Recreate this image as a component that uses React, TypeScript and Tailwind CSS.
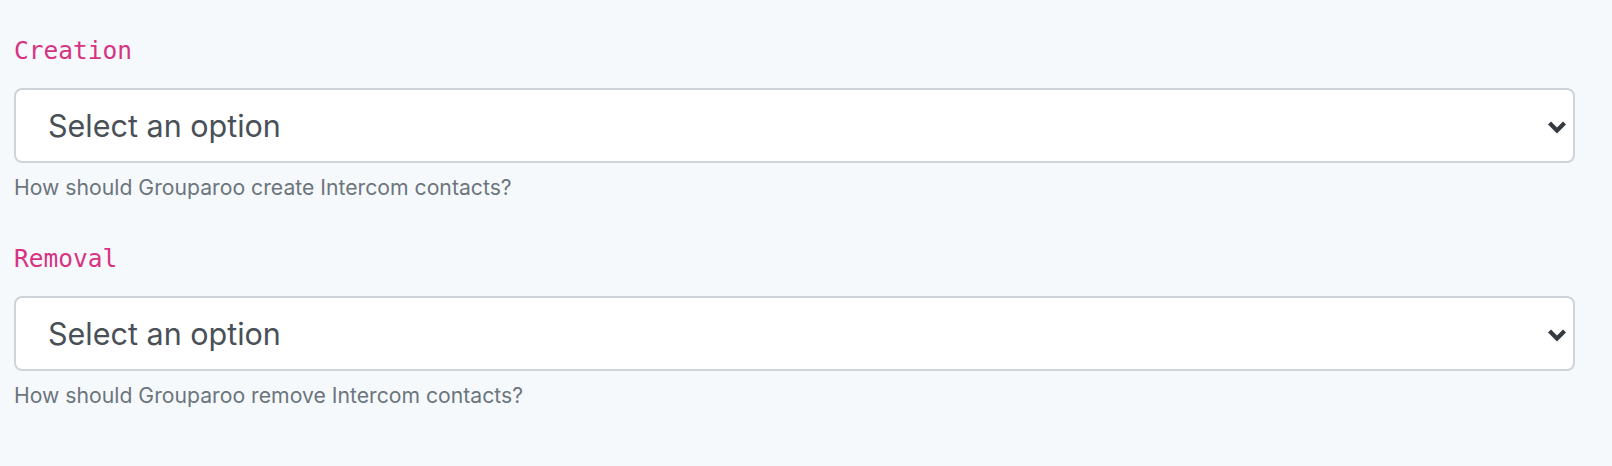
import React from "react";

const Chevron = () => (
  <svg width="20" height="14" viewBox="0 0 20 14" className="mt-[2px] shrink-0">
    <polyline points="2.5,3 10,10.5 17.5,3" fill="none" stroke="#343a40" strokeWidth="4.2" strokeLinecap="butt" strokeLinejoin="miter" />
  </svg>
);

function Field({ label, help }: { label: string; help: string }) {
  return (
    <div className="flex flex-col">
      <code className="block text-[24.5px] leading-[28px] text-[#d63384]" style={{ fontFamily: '"DejaVu Sans Mono", monospace' }}>
        {label}
      </code>
      <div className="mt-[23px] flex h-[75px] w-[1561px] items-center justify-between rounded-[8px] border-2 border-[#ced4da] bg-white pl-[32px] pr-[6px]">
        <span className="text-[30.5px] text-[#495057]">Select an option</span>
        <Chevron />
      </div>
      <div className="mt-[10px] text-[21.2px] leading-[28px] text-[#6c757d]">{help}</div>
    </div>
  );
}

export default function App() {
  return (
    <div className="h-[466px] w-[1612px] bg-[#f6f9fb] pl-[14px] pt-[37px]" style={{ fontFamily: 'Inter, "Noto Sans", sans-serif' }}>
      <div className="flex flex-col gap-[44px]">
        <Field label="Creation" help="How should Grouparoo create Intercom contacts?" />
        <Field label="Removal" help="How should Grouparoo remove Intercom contacts?" />
      </div>
    </div>
  );
}
